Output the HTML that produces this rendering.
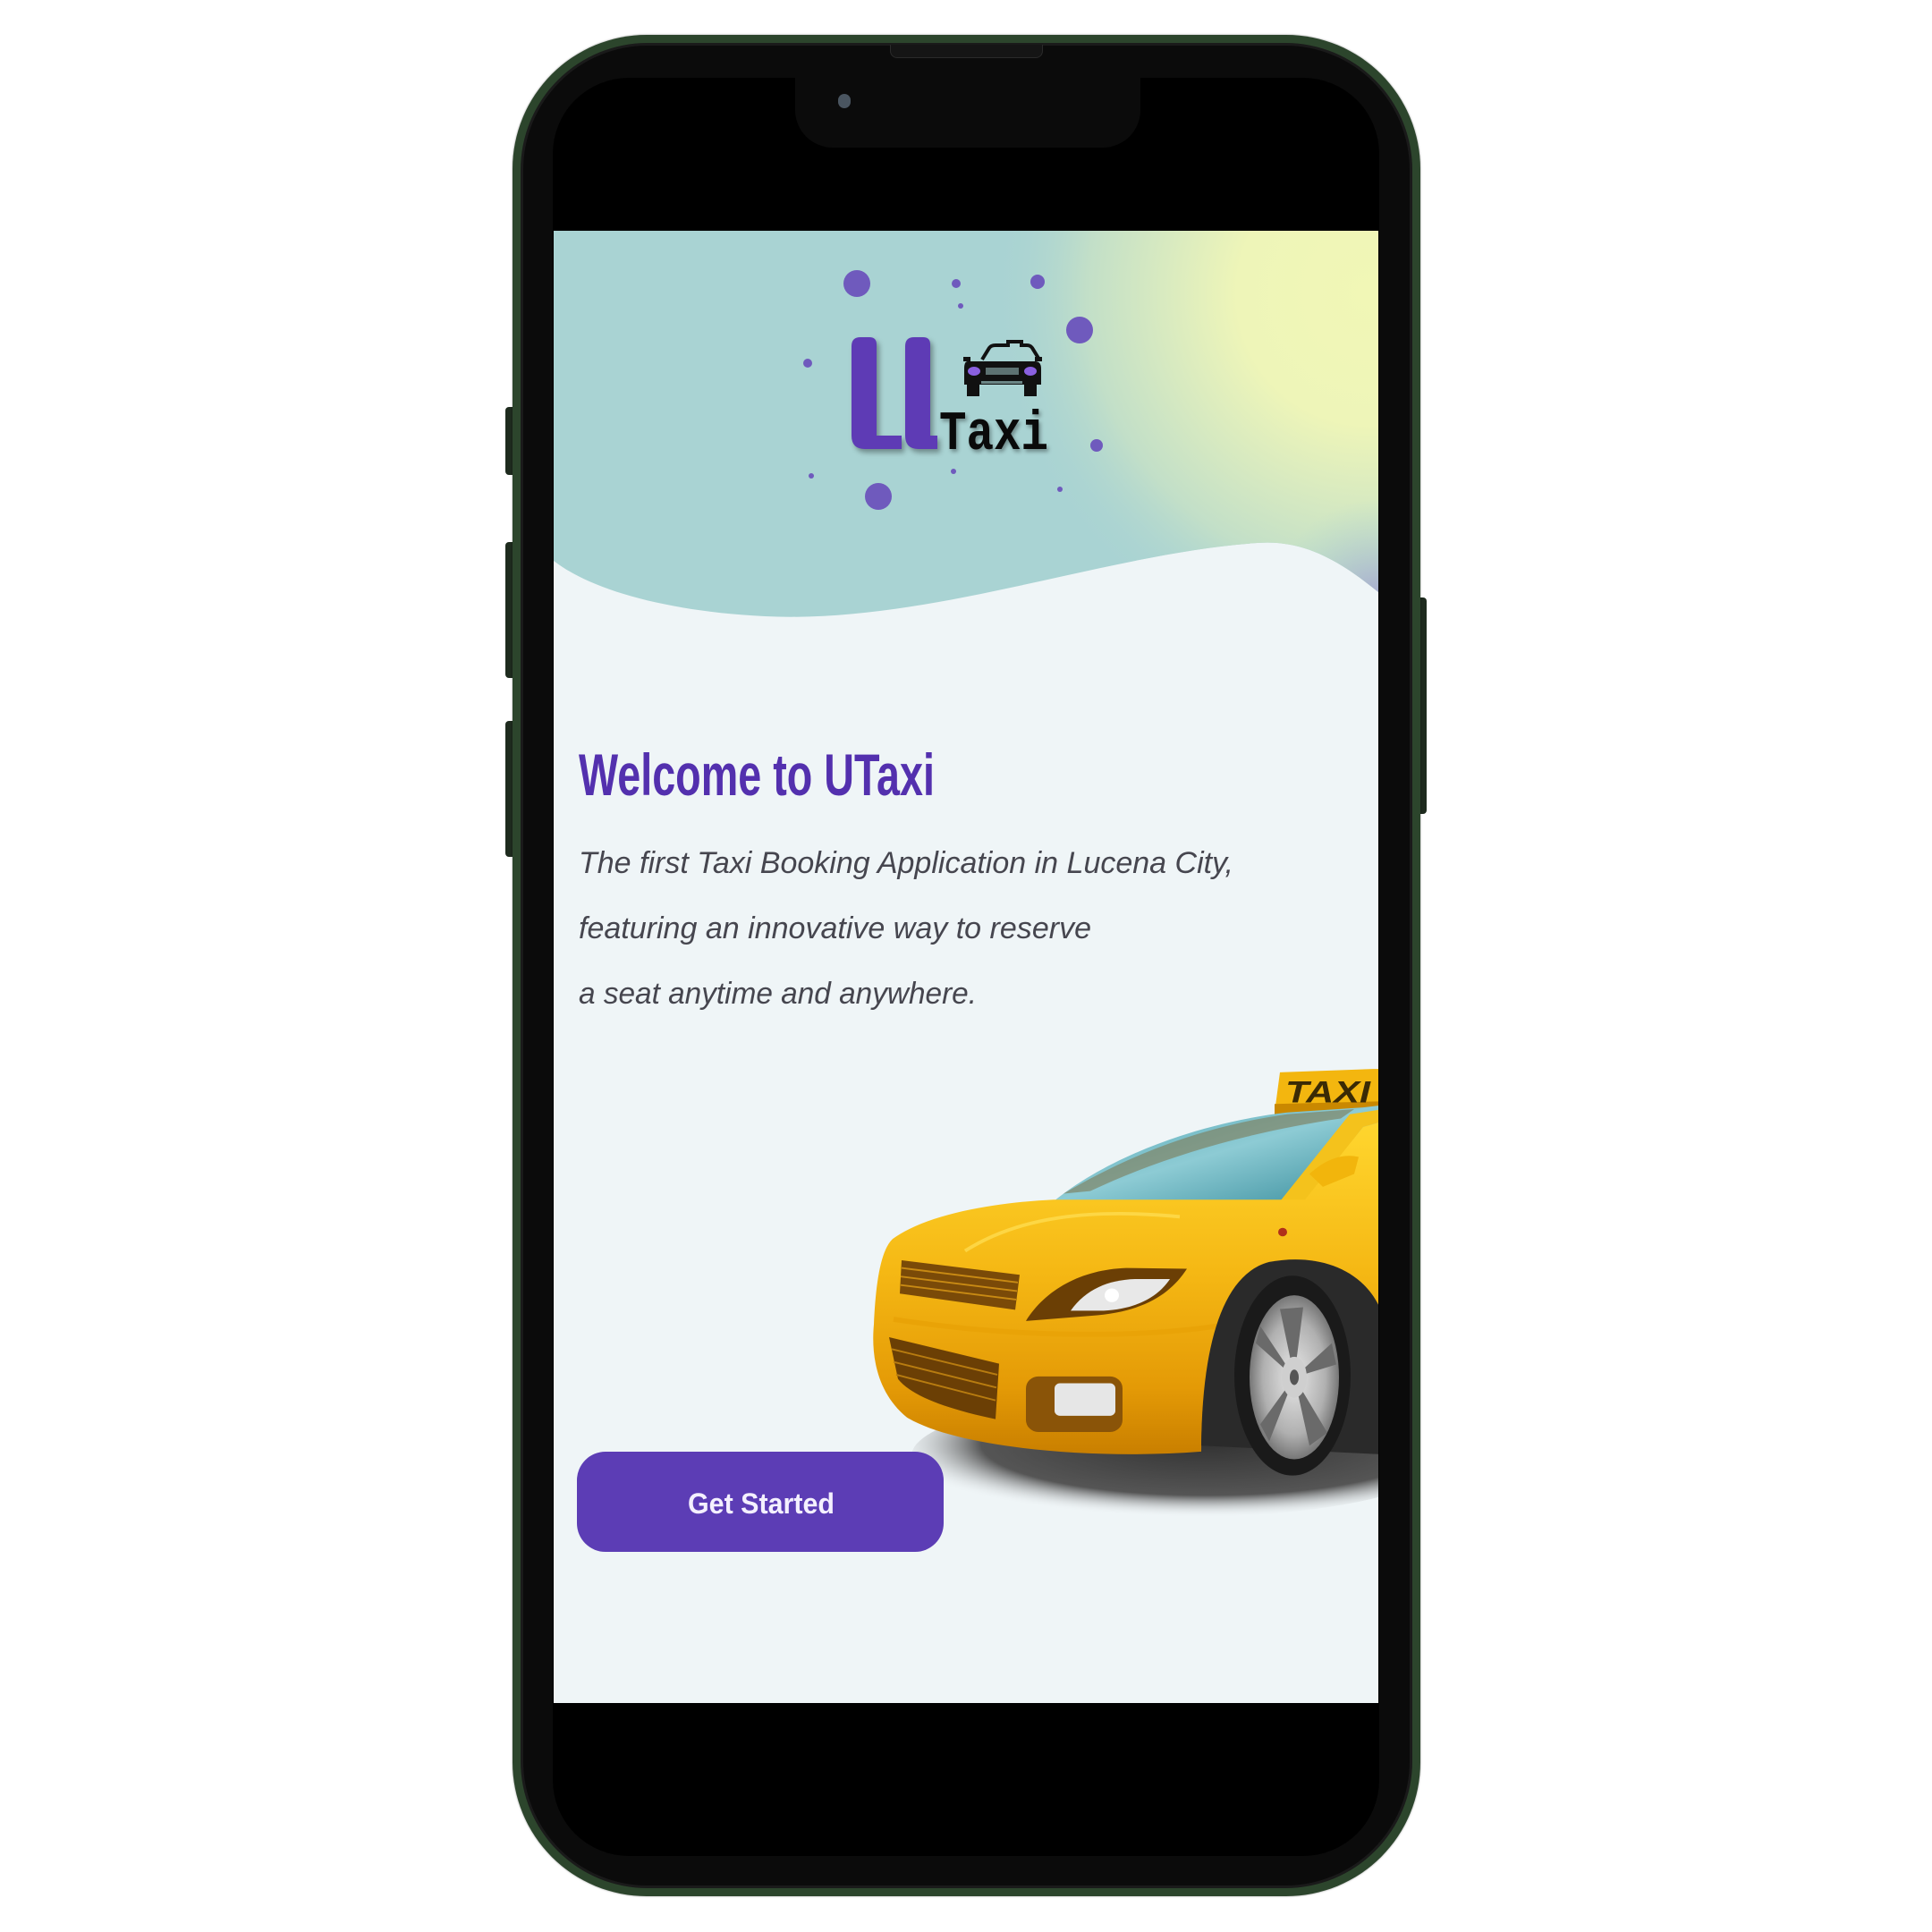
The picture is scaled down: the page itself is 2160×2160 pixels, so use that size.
<!DOCTYPE html>
<html><head><meta charset="utf-8">
<style>
html,body{margin:0;padding:0;background:#fff;}
body{width:2160px;height:2160px;position:relative;overflow:hidden;}
.abs{position:absolute;}
</style></head>
<body>
<div class="abs" style="left:565px;top:455px;width:12px;height:76px;background:#1e2b1e;border-radius:4px 0 0 4px"></div>
<div class="abs" style="left:565px;top:606px;width:12px;height:152px;background:#1e2b1e;border-radius:4px 0 0 4px"></div>
<div class="abs" style="left:565px;top:806px;width:12px;height:152px;background:#1e2b1e;border-radius:4px 0 0 4px"></div>
<div class="abs" style="left:1583px;top:668px;width:12px;height:242px;background:#1e2b1e;border-radius:0 4px 4px 0"></div>
<div class="abs" style="left:573px;top:39px;width:1015px;height:2081px;border-radius:150px;background:#2c452c;box-shadow:0 0 2px rgba(0,0,0,.4)"></div>
<div class="abs" style="left:582px;top:48px;width:997px;height:2063px;border-radius:142px;background:#1a1a1a"></div>
<div class="abs" style="left:585px;top:51px;width:991px;height:2057px;border-radius:139px;background:#0b0b0b"></div>
<div class="abs" style="left:995px;top:50px;width:169px;height:14px;background:#151515;border-radius:0 0 8px 8px;border:1px solid #2a2a2a;border-top:none"></div>
<div class="abs" style="left:618px;top:87px;width:924px;height:1988px;border-radius:85px;background:#000"></div>
<div class="abs" style="left:889px;top:80px;width:386px;height:85px;background:#0b0b0b;border-radius:0 0 42px 42px"></div>
<div class="abs" style="left:937px;top:105px;width:14px;height:16px;background:#4a5560;border-radius:7px"></div>
<svg class="abs" style="left:619px;top:258px" width="922" height="1646" viewBox="0 0 922 1646">
<defs>
<radialGradient id="yg" cx="911" cy="70" r="420" gradientUnits="userSpaceOnUse">
<stop offset="0" stop-color="#f1f7b6"/><stop offset="0.35" stop-color="#eef5b8"/><stop offset="0.75" stop-color="#c2dfc8"/><stop offset="1" stop-color="#a9d3d3" stop-opacity="0"/>
</radialGradient>
<radialGradient id="pg" cx="922" cy="420" r="120" gradientUnits="userSpaceOnUse">
<stop offset="0" stop-color="#a8a2cf"/><stop offset="1" stop-color="#a9d3d3" stop-opacity="0"/>
</radialGradient>
<linearGradient id="body" x1="0" y1="0" x2="0" y2="1">
<stop offset="0" stop-color="#ffd62e"/><stop offset="0.45" stop-color="#f5b814"/><stop offset="0.8" stop-color="#e49a06"/><stop offset="1" stop-color="#c97f00"/>
</linearGradient>
<linearGradient id="glass" x1="0" y1="0" x2="1" y2="1">
<stop offset="0" stop-color="#4fa3b2"/><stop offset="0.5" stop-color="#8dcbd4"/><stop offset="1" stop-color="#3a8e9d"/>
</linearGradient>
<radialGradient id="sh" cx="0.55" cy="0.4" r="0.6">
<stop offset="0" stop-color="#333"/><stop offset="0.7" stop-color="#555"/><stop offset="1" stop-color="#eff4f7" stop-opacity="0"/>
</radialGradient>
<radialGradient id="rim" cx="0.5" cy="0.5" r="0.5">
<stop offset="0" stop-color="#e8e8e8"/><stop offset="0.7" stop-color="#b0b0b0"/><stop offset="1" stop-color="#777"/>
</radialGradient>
</defs>
<rect width="922" height="1646" fill="#eff5f7"/>
<path d="M0,0 H922 V404 C880,370 840,345 787,349 C620,360 420,440 236,431 C120,425 40,400 0,369 Z" fill="#a9d3d3"/>
<path d="M0,0 H922 V404 C880,370 840,345 787,349 C620,360 420,440 236,431 C120,425 40,400 0,369 Z" fill="url(#yg)"/>
<path d="M0,0 H922 V404 C880,370 840,345 787,349 C620,360 420,440 236,431 C120,425 40,400 0,369 Z" fill="url(#pg)"/>
<g fill="#6f5abd">
<circle cx="339" cy="59" r="15"/><circle cx="450" cy="59" r="5"/><circle cx="455" cy="84" r="3"/>
<circle cx="541" cy="57" r="8"/><circle cx="588" cy="111" r="15"/><circle cx="284" cy="148" r="5"/>
<circle cx="607" cy="240" r="7"/><circle cx="288" cy="274" r="3"/><circle cx="447" cy="269" r="3"/>
<circle cx="363" cy="297" r="15"/><circle cx="566" cy="289" r="3"/>
</g>
<g fill="#5e3bb5" style="filter:drop-shadow(3px 4px 3px rgba(0,0,0,.35))">
<path d="M343,119 H353 Q361,119 361,127 V229 H389 V244 H348 Q333,244 333,229 V129 Q333,119 343,119 Z"/>
<path d="M403,119 H413 Q421,119 421,127 V229 H429 V244 H408 Q393,244 393,229 V129 Q393,119 403,119 Z"/>
</g>
<g>
<path d="M479,144 L487,131 Q489,128 494,128 H508 V124 H523 V128 H529 Q533,128 535,131 L543,144" fill="none" stroke="#111" stroke-width="4"/>
<path d="M463,146 H538 Q545,146 545,154 V172 H459 V154 Q459,146 463,146 Z" fill="#111"/>
<rect x="458" y="141" width="8" height="5" fill="#111"/><rect x="538" y="141" width="8" height="5" fill="#111"/>
<ellipse cx="470" cy="157" rx="7" ry="5" fill="#8a60e0"/><ellipse cx="533" cy="157" rx="7" ry="5" fill="#8a60e0"/>
<rect x="483" y="153" width="37" height="8" fill="#a9d3d3" opacity=".5"/>
<rect x="462" y="172" width="14" height="13" fill="#111"/><rect x="526" y="172" width="14" height="13" fill="#111"/>
<rect x="478" y="168" width="46" height="3" fill="#a9d3d3" opacity=".6"/>
</g>
<text x="431" y="244" font-family="Liberation Mono, monospace" font-weight="bold" font-size="62" textLength="122" lengthAdjust="spacingAndGlyphs" fill="#0a0a0a" style="filter:drop-shadow(2px 3px 2px rgba(0,0,0,.35))">Taxi</text>
<text x="28" y="631" font-family="Liberation Sans, sans-serif" font-weight="bold" font-size="66" textLength="398" lengthAdjust="spacingAndGlyphs" fill="#5330ae">Welcome to UTaxi</text>
<g font-family="Liberation Sans, sans-serif" font-style="italic" font-size="34" fill="#46464f">
<text x="28" y="718" textLength="732" lengthAdjust="spacingAndGlyphs">The first Taxi Booking Application in Lucena City,</text>
<text x="28" y="791" textLength="573" lengthAdjust="spacingAndGlyphs">featuring an innovative way to reserve</text>
<text x="28" y="864" textLength="445" lengthAdjust="spacingAndGlyphs">a seat anytime and anywhere.</text>
</g>
<g transform="translate(0,939) scale(1,0.955) translate(0,-939)">
<ellipse cx="700" cy="1390" rx="300" ry="72" fill="url(#sh)"/>
<path d="M812,941 L916,937 L922,937 V985 L806,988 Z" fill="#f3b60f"/>
<path d="M806,978 L922,975 V988 L806,990 Z" fill="#c98800"/>
<text x="818" y="976" font-family="Liberation Sans, sans-serif" font-weight="bold" font-style="italic" font-size="36" textLength="95" lengthAdjust="spacingAndGlyphs" fill="#3a2a05">TAXI</text>
<path d="M559,1092 C620,1040 720,1000 820,988 L905,982 L922,980 V1010 L905,1010 L812,1092 Z" fill="url(#glass)"/>
<path d="M570,1083 C640,1040 720,1005 820,990 L895,984 L880,995 C780,1010 680,1040 600,1080 Z" fill="#7d7a55" opacity=".6"/>
<path d="M812,1092 L890,990 L922,985 V1000 L905,1005 L840,1092 Z" fill="#f4c21c"/>
<path d="M379,1136 C420,1105 500,1093 559,1090 L812,1090 L840,1090 L905,1005 L922,1000 V1215 C900,1170 850,1155 800,1165 C745,1180 725,1270 724,1385 C600,1395 450,1380 395,1345 C360,1315 355,1270 358,1236 C360,1190 365,1150 379,1136 Z" fill="url(#body)"/>
<path d="M845,1060 C860,1045 880,1035 900,1040 L895,1060 L860,1075 Z" fill="#f2b50c"/>
<path d="M380,1230 C500,1250 650,1255 760,1235" stroke="#e9a307" stroke-width="6" fill="none"/>
<path d="M460,1150 C520,1110 600,1100 700,1110" stroke="#ffe055" stroke-width="4" fill="none" opacity=".7"/>
<circle cx="815" cy="1128" r="5" fill="#b0301a"/>
<path d="M389,1161 L521,1178 L516,1219 L387,1200 Z" fill="#7a4a08"/>
<g stroke="#c88a14" stroke-width="2"><line x1="389" y1="1170" x2="519" y2="1187"/><line x1="388" y1="1180" x2="518" y2="1197"/><line x1="388" y1="1190" x2="517" y2="1207"/></g>
<path d="M528,1232 C550,1195 590,1172 640,1170 L708,1171 C690,1200 660,1222 600,1226 Z" fill="#6b3f05"/>
<path d="M578,1220 C595,1195 620,1184 650,1183 L689,1183 C675,1205 650,1218 615,1220 Z" fill="#e8e8e8"/>
<circle cx="624" cy="1202" r="8" fill="#fff"/>
<path d="M375,1251 L498,1282 L494,1347 C440,1335 400,1320 385,1300 Z" fill="#6b3f05"/>
<g stroke="#b87c10" stroke-width="2"><line x1="378" y1="1265" x2="496" y2="1295"/><line x1="380" y1="1280" x2="495" y2="1310"/><line x1="383" y1="1295" x2="494" y2="1325"/></g>
<rect x="528" y="1297" width="108" height="65" rx="14" fill="#8a5408"/>
<rect x="560" y="1305" width="68" height="38" rx="6" fill="#e6e6e6"/>
<g transform="translate(0,-32)">
<path d="M724,1410 C725,1300 745,1210 800,1195 C850,1185 900,1200 922,1245 V1420 Z" fill="#2a2a2a"/>
<ellipse cx="826" cy="1328" rx="65" ry="117" fill="#1a1a1a"/>
<ellipse cx="828" cy="1330" rx="50" ry="96" fill="url(#rim)"/>
<g fill="#6a6a6a">
<path d="M828,1330 L812,1250 L838,1248 Z"/><path d="M828,1330 L870,1290 L875,1315 Z"/><path d="M828,1330 L865,1395 L845,1410 Z"/><path d="M828,1330 L800,1405 L790,1385 Z"/><path d="M828,1330 L785,1290 L790,1270 Z"/>
</g>
<ellipse cx="828" cy="1330" rx="14" ry="24" fill="#cfcfcf"/>
<ellipse cx="828" cy="1330" rx="5" ry="9" fill="#555"/>
</g>
</g>
<rect x="26" y="1365" width="410" height="112" rx="32" fill="#5c3db5"/>
<text x="150" y="1434" font-family="Liberation Sans, sans-serif" font-weight="bold" font-size="32" textLength="164" lengthAdjust="spacingAndGlyphs" fill="#f4f0ff">Get Started</text>
</svg>
</body></html>
